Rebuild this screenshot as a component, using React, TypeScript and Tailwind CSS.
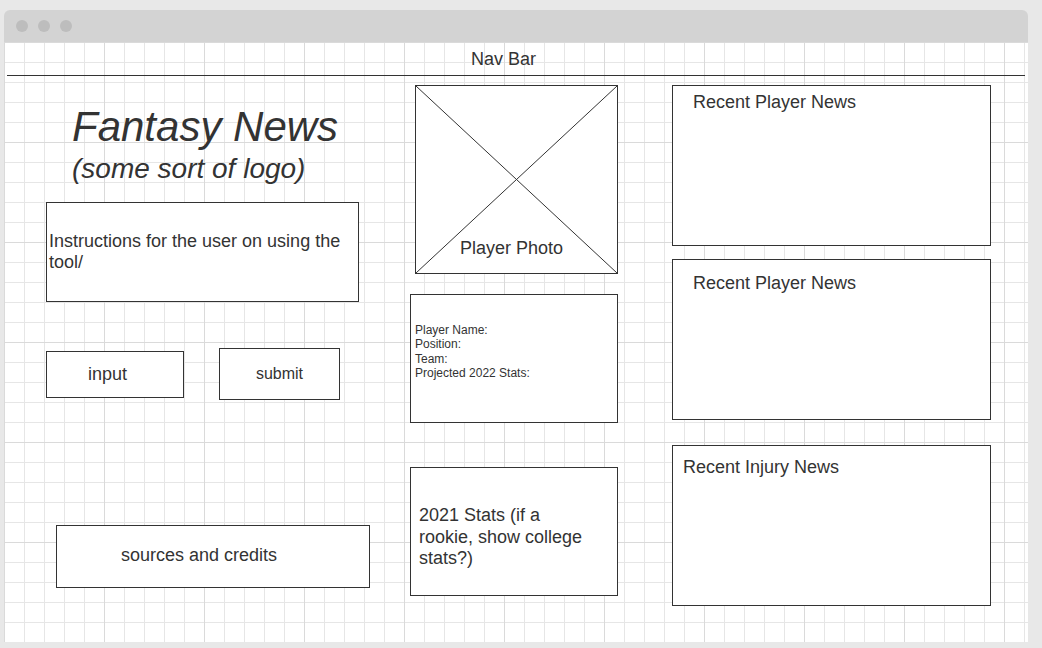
const box = "border border-[#333] bg-white";

export default function App() {
  return (
    <div className="h-[648px] w-full overflow-hidden bg-[#e8e8e8] pl-[4px] pt-[10px] font-['Liberation_Sans',Arial,sans-serif] text-[#333]">
      <div className="w-[1024px]">
        {/* window chrome */}
        <div className="flex h-[32px] items-center gap-[10px] rounded-t-[6px] bg-[#d3d3d3] pl-[12px]">
          <span className="h-[12px] w-[12px] rounded-full bg-[#bdbdbd]" />
          <span className="h-[12px] w-[12px] rounded-full bg-[#bdbdbd]" />
          <span className="h-[12px] w-[12px] rounded-full bg-[#bdbdbd]" />
        </div>

        {/* canvas */}
        <div className="h-[600px] bg-white [background-image:linear-gradient(to_right,#dadada_1px,transparent_1px),linear-gradient(to_bottom,#dadada_1px,transparent_1px),linear-gradient(to_right,#e6e6e6_1px,transparent_1px),linear-gradient(to_bottom,#e6e6e6_1px,transparent_1px)] [background-size:100px_100px,100px_100px,20px_20px,20px_20px]">
          <header className="mx-[3px] border-b border-[#333] pb-[7px] pl-[464px] pt-[8px]">
            <span className="block text-[18px] leading-none">Nav Bar</span>
          </header>

          <div className="flex">
            {/* left column */}
            <div className="ml-[42px] flex w-[324px] flex-col">
              <h1 className="ml-[26px] mt-[30px] text-[42px] italic leading-none">Fantasy News</h1>
              <p className="ml-[26px] mt-[7px] text-[28px] italic leading-none">(some sort of logo)</p>
              <div className={`${box} mt-[19px] flex h-[100px] w-[313px] items-center px-[2px] text-[18px] leading-[21.5px]`}>
                Instructions for the user on using the tool/
              </div>
              <div className="mt-[46px] flex items-center">
                <div className={`${box} flex h-[47px] w-[138px] items-center pl-[41px] text-[18px]`}>input</div>
                <div className={`${box} ml-[35px] flex h-[52px] w-[121px] items-center justify-center text-[16px]`}>submit</div>
              </div>
              <div className={`${box} ml-[10px] mt-[125px] flex h-[63px] w-[314px] items-center pb-[2px] pl-[64px] text-[18px]`}>
                sources and credits
              </div>
            </div>

            {/* middle column */}
            <div className="ml-[40px] flex w-[208px] flex-col">
              <div className={`${box} relative ml-[5px] mt-[9px] flex h-[189px] w-[203px] flex-col justify-end pb-[16px] pl-[44px]`}>
                <svg className="absolute inset-0 h-full w-full" viewBox="0 0 201 187" preserveAspectRatio="none">
                  <line x1="0" y1="0" x2="201" y2="187" stroke="#333" strokeWidth="1" />
                  <line x1="201" y1="0" x2="0" y2="187" stroke="#333" strokeWidth="1" />
                </svg>
                <span className="relative text-[18px] leading-none">Player Photo</span>
              </div>
              <div className={`${box} mt-[20px] h-[129px] w-[208px] pl-[4px] pt-[28px] text-[12px] leading-[14.4px]`}>
                <p>Player Name:</p>
                <p>Position:</p>
                <p>Team:</p>
                <p>Projected 2022 Stats:</p>
              </div>
              <div className={`${box} mt-[44px] h-[129px] w-[208px] pl-[8px] pt-[37px] text-[18px] leading-[21.5px]`}>
                <p className="w-[170px]">2021 Stats (if a rookie, show college stats?)</p>
              </div>
            </div>

            {/* right column */}
            <div className="ml-[54px] flex w-[319px] flex-col">
              <div className={`${box} mt-[9px] h-[161px] pl-[20px] pt-[7px] text-[18px] leading-none`}>Recent Player News</div>
              <div className={`${box} mt-[13px] h-[161px] pl-[20px] pt-[14px] text-[18px] leading-none`}>Recent Player News</div>
              <div className={`${box} mt-[25px] h-[161px] pl-[10px] pt-[12px] text-[18px] leading-none`}>Recent Injury News</div>
            </div>
          </div>
        </div>
      </div>
    </div>
  );
}
